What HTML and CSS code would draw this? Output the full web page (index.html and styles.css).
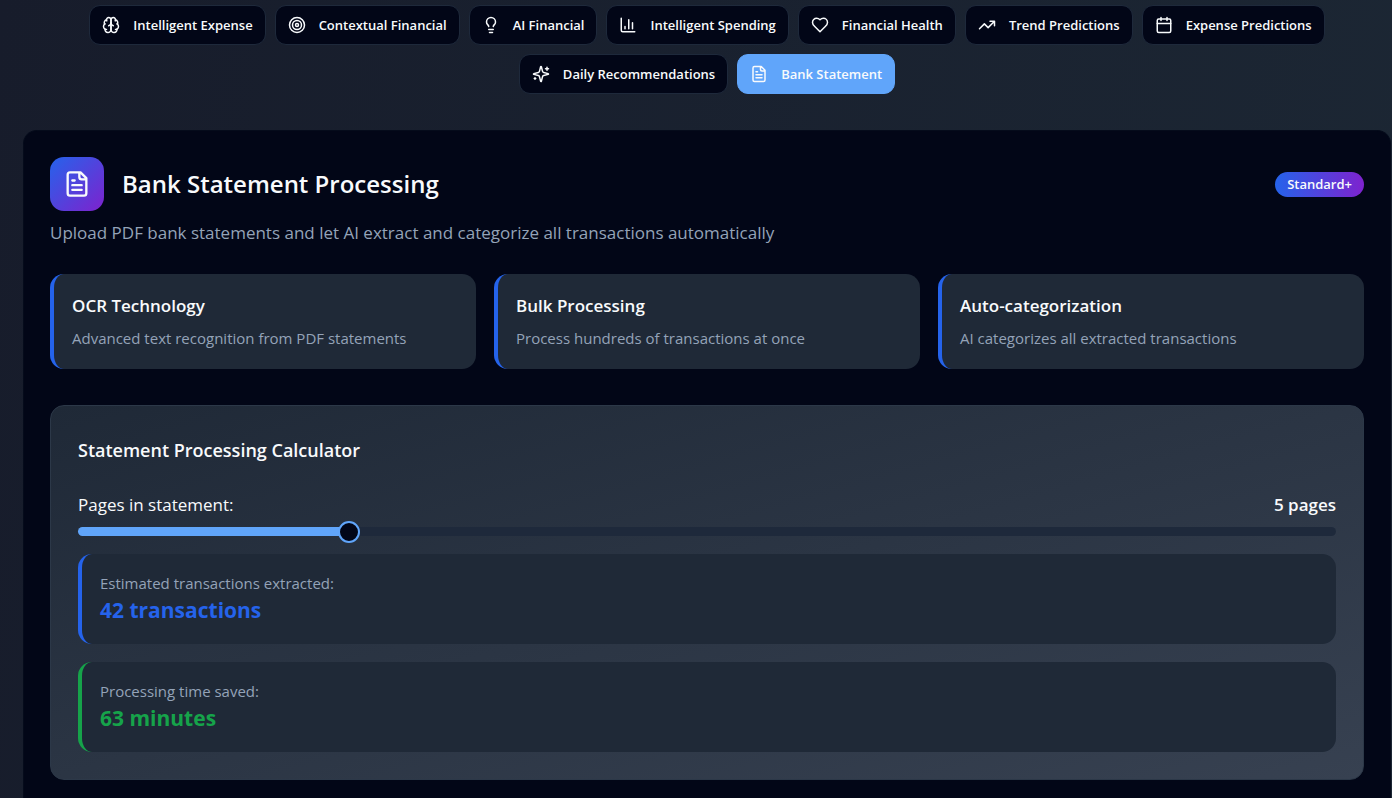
FILE: index.html
```html
<!DOCTYPE html>
<html lang="en">
<head>
<meta charset="utf-8">
<meta name="viewport" content="width=device-width, initial-scale=1">
<title>Bank Statement Processing</title>
<link rel="stylesheet" href="styles.css">
</head>
<body>
<nav class="tabs" aria-label="AI features">
  <button class="tab" type="button"><svg class="icon" viewBox="0 0 24 24"><path d="M12 5a3 3 0 1 0-5.997.125 4 4 0 0 0-2.526 5.77 4 4 0 0 0 .556 6.588A4 4 0 1 0 12 18Z"/><path d="M12 5a3 3 0 1 1 5.997.125 4 4 0 0 1 2.526 5.77 4 4 0 0 1-.556 6.588A4 4 0 1 1 12 18Z"/><path d="M15 13a4.500 4.500 0 0 1-3-4 4.500 4.500 0 0 1-3 4M17.599 6.500a3 3 0 0 0 .399-1.375M6.003 5.125A3 3 0 0 0 6.401 6.500M3.477 10.896a4 4 0 0 1 .585-.396M19.938 10.500a4 4 0 0 1 .585.396M6 18a4 4 0 0 1-1.967-.516M19.967 17.484A4 4 0 0 1 18 18"/></svg>Intelligent Expense</button>
  <button class="tab" type="button"><svg class="icon" viewBox="0 0 24 24"><circle cx="12" cy="12" r="10"/><circle cx="12" cy="12" r="6"/><circle cx="12" cy="12" r="2"/></svg>Contextual Financial</button>
  <button class="tab" type="button"><svg class="icon" viewBox="0 0 24 24"><path d="M15 14c.2-1 .7-1.700 1.500-2.500 1-.9 1.500-2.200 1.500-3.500A6 6 0 0 0 6 8c0 1 .2 2.200 1.500 3.500.7.7 1.300 1.500 1.500 2.500M9 18h6M10 22h4"/></svg>AI Financial</button>
  <button class="tab" type="button"><svg class="icon" viewBox="0 0 24 24"><path d="M3 3v16a2 2 0 0 0 2 2h16M18 17V9M13 17V5M8 17v-3"/></svg>Intelligent Spending</button>
  <button class="tab" type="button"><svg class="icon" viewBox="0 0 24 24"><path d="M19 14c1.490-1.460 3-3.210 3-5.500A5.500 5.500 0 0 0 16.500 3c-1.760 0-3 .5-4.500 2-1.500-1.500-2.740-2-4.500-2A5.500 5.500 0 0 0 2 8.500c0 2.300 1.500 4.050 3 5.500l7 7Z"/></svg>Financial Health</button>
  <button class="tab" type="button"><svg class="icon" viewBox="0 0 24 24"><path d="m22 7-8.500 8.500-5-5L2 17M16 7h6v6"/></svg>Trend Predictions</button>
  <button class="tab" type="button"><svg class="icon" viewBox="0 0 24 24"><path d="M8 2v4M16 2v4M3 10h18"/><rect width="18" height="18" x="3" y="4" rx="2"/></svg>Expense Predictions</button>
  <button class="tab" type="button"><svg class="icon" viewBox="0 0 24 24"><path d="M9.937 15.500A2 2 0 0 0 8.500 14.063l-6.135-1.582a.5.5 0 0 1 0-.962L8.500 9.936A2 2 0 0 0 9.937 8.500l1.582-6.135a.5.5 0 0 1 .963 0L14.063 8.500A2 2 0 0 0 15.500 9.937l6.135 1.581a.5.5 0 0 1 0 .964L15.500 14.063a2 2 0 0 0-1.437 1.437l-1.582 6.135a.5.5 0 0 1-.963 0zM20 3v4M22 5h-4M4 17v2M5 18H3"/></svg>Daily Recommendations</button>
  <button class="tab tab-active" type="button" aria-current="page"><svg class="icon" viewBox="0 0 24 24"><path d="M15 2H6a2 2 0 0 0-2 2v16a2 2 0 0 0 2 2h12a2 2 0 0 0 2-2V7ZM14 2v4a2 2 0 0 0 2 2h4M10 9H8M16 13H8M16 17H8"/></svg>Bank Statement</button>
</nav>
<main class="panel">
  <header class="panel-header">
    <span class="panel-icon"><svg class="icon icon-large" viewBox="0 0 24 24"><path d="M15 2H6a2 2 0 0 0-2 2v16a2 2 0 0 0 2 2h12a2 2 0 0 0 2-2V7ZM14 2v4a2 2 0 0 0 2 2h4M10 9H8M16 13H8M16 17H8"/></svg></span>
    <h1 class="panel-title">Bank Statement Processing</h1>
    <span class="badge">Standard+</span>
  </header>
  <p class="panel-lead">Upload PDF bank statements and let AI extract and categorize all transactions automatically</p>
  <section class="features" aria-label="Features">
    <article class="feature"><h2 class="feature-title">OCR Technology</h2><p class="feature-text">Advanced text recognition from PDF statements</p></article>
    <article class="feature"><h2 class="feature-title">Bulk Processing</h2><p class="feature-text">Process hundreds of transactions at once</p></article>
    <article class="feature"><h2 class="feature-title">Auto-categorization</h2><p class="feature-text">AI categorizes all extracted transactions</p></article>
  </section>
  <section class="calculator">
    <h2 class="calculator-title">Statement Processing Calculator</h2>
    <div class="field">
      <label for="pages">Pages in statement:</label>
      <output class="field-value" for="pages">5 pages</output>
    </div>
    <input class="slider" id="pages" type="range" min="1" max="20" value="5">
    <div class="result result-blue"><p class="result-label">Estimated transactions extracted:</p><p class="result-value">42 transactions</p></div>
    <div class="result result-green"><p class="result-label">Processing time saved:</p><p class="result-value">63 minutes</p></div>
  </section>
</main>
</body>
</html>
```

FILE: styles.css
```css
* { box-sizing: border-box; }

body {
  margin: 0;
  min-height: 100vh;
  padding: 5px 1px 0 23px;
  display: flex;
  flex-direction: column;
  gap: 36px;
  color: #f8fafc;
  font: 17px/28px "Open Sans", "Noto Sans", sans-serif;
  background: linear-gradient(100deg, #171c2b, #1c2734);
}

h1, h2, p { margin: 0; }

.tabs {
  display: flex;
  flex-wrap: wrap;
  justify-content: center;
  gap: 9px;
  padding: 0 27px;
}

.tab {
  display: flex;
  align-items: center;
  gap: 13px;
  height: 40px;
  padding: 0 12px;
  border: 1px solid #1e293b;
  border-radius: 11px;
  color: #f8fafc;
  background: #020617;
  font: 600 13px/20px "Open Sans", "Noto Sans", sans-serif;
}

.tab-active {
  border-color: #60a5fa;
  background: #60a5fa;
}

.icon {
  width: 18px;
  height: 18px;
  flex: none;
  fill: none;
  stroke: currentColor;
  stroke-width: 2;
  stroke-linecap: round;
  stroke-linejoin: round;
}

.icon-large {
  width: 28px;
  height: 28px;
}

.panel {
  flex: 1;
  padding: 26px 26px 18px;
  border: 1px solid #050b1b;
  border-bottom: 0;
  border-radius: 14px 14px 0 0;
  background: #020617;
}

.panel-header {
  display: flex;
  align-items: center;
  gap: 18px;
}

.panel-icon {
  width: 54px;
  height: 54px;
  display: grid;
  place-items: center;
  border-radius: 14px;
  background: linear-gradient(135deg, #2563eb, #7e22ce);
}

.panel-title {
  flex: 1;
  font-size: 24px;
  line-height: 36px;
  font-weight: 600;
}

.badge {
  padding: 2px 12px 3px;
  border-radius: 13px;
  background: linear-gradient(90deg, #2563eb, #7e22ce);
  font-size: 13px;
  line-height: 20px;
  font-weight: 600;
}

.panel-lead {
  margin-top: 8px;
  color: #94a3b8;
}

.features {
  display: grid;
  grid-template-columns: repeat(3, 1fr);
  gap: 18px;
  margin-top: 27px;
}

.feature,
.result {
  padding: 18px;
  border-left: 4px solid #2563eb;
  border-radius: 14px;
  background: #1f2937;
}

.feature-title {
  font-size: 17px;
  line-height: 27px;
  font-weight: 600;
}

.feature-text {
  margin-top: 7px;
  color: #94a3b8;
  font-size: 15px;
  line-height: 25px;
}

.calculator {
  margin-top: 36px;
  padding: 27px;
  border: 1px solid #2c3848;
  border-radius: 14px;
  background: linear-gradient(to bottom right, #1f2937, #374151);
}

.calculator-title {
  font-size: 18px;
  line-height: 34px;
  font-weight: 600;
}

.field {
  display: flex;
  justify-content: space-between;
  margin-top: 24px;
}

.field-value { font-weight: 600; }

.slider {
  --fill: calc(11px + (100% - 22px) * 4 / 19);
  display: block;
  width: 100%;
  height: 9px;
  margin: 8px 0 18px;
  appearance: none;
  border-radius: 5px;
  background: linear-gradient(90deg, #60a5fa var(--fill), #1e293b var(--fill));
}

.slider::-webkit-slider-thumb {
  appearance: none;
  width: 22px;
  height: 22px;
  border: 2px solid #60a5fa;
  border-radius: 50%;
  background: #020617;
}

.result + .result { margin-top: 18px; }

.result-green { border-color: #16a34a; }

.result-label {
  color: #94a3b8;
  font-size: 15px;
  line-height: 22px;
}

.result-value {
  color: #2563eb;
  font-size: 21px;
  line-height: 32px;
  font-weight: 700;
}

.result-green .result-value { color: #16a34a; }
```
